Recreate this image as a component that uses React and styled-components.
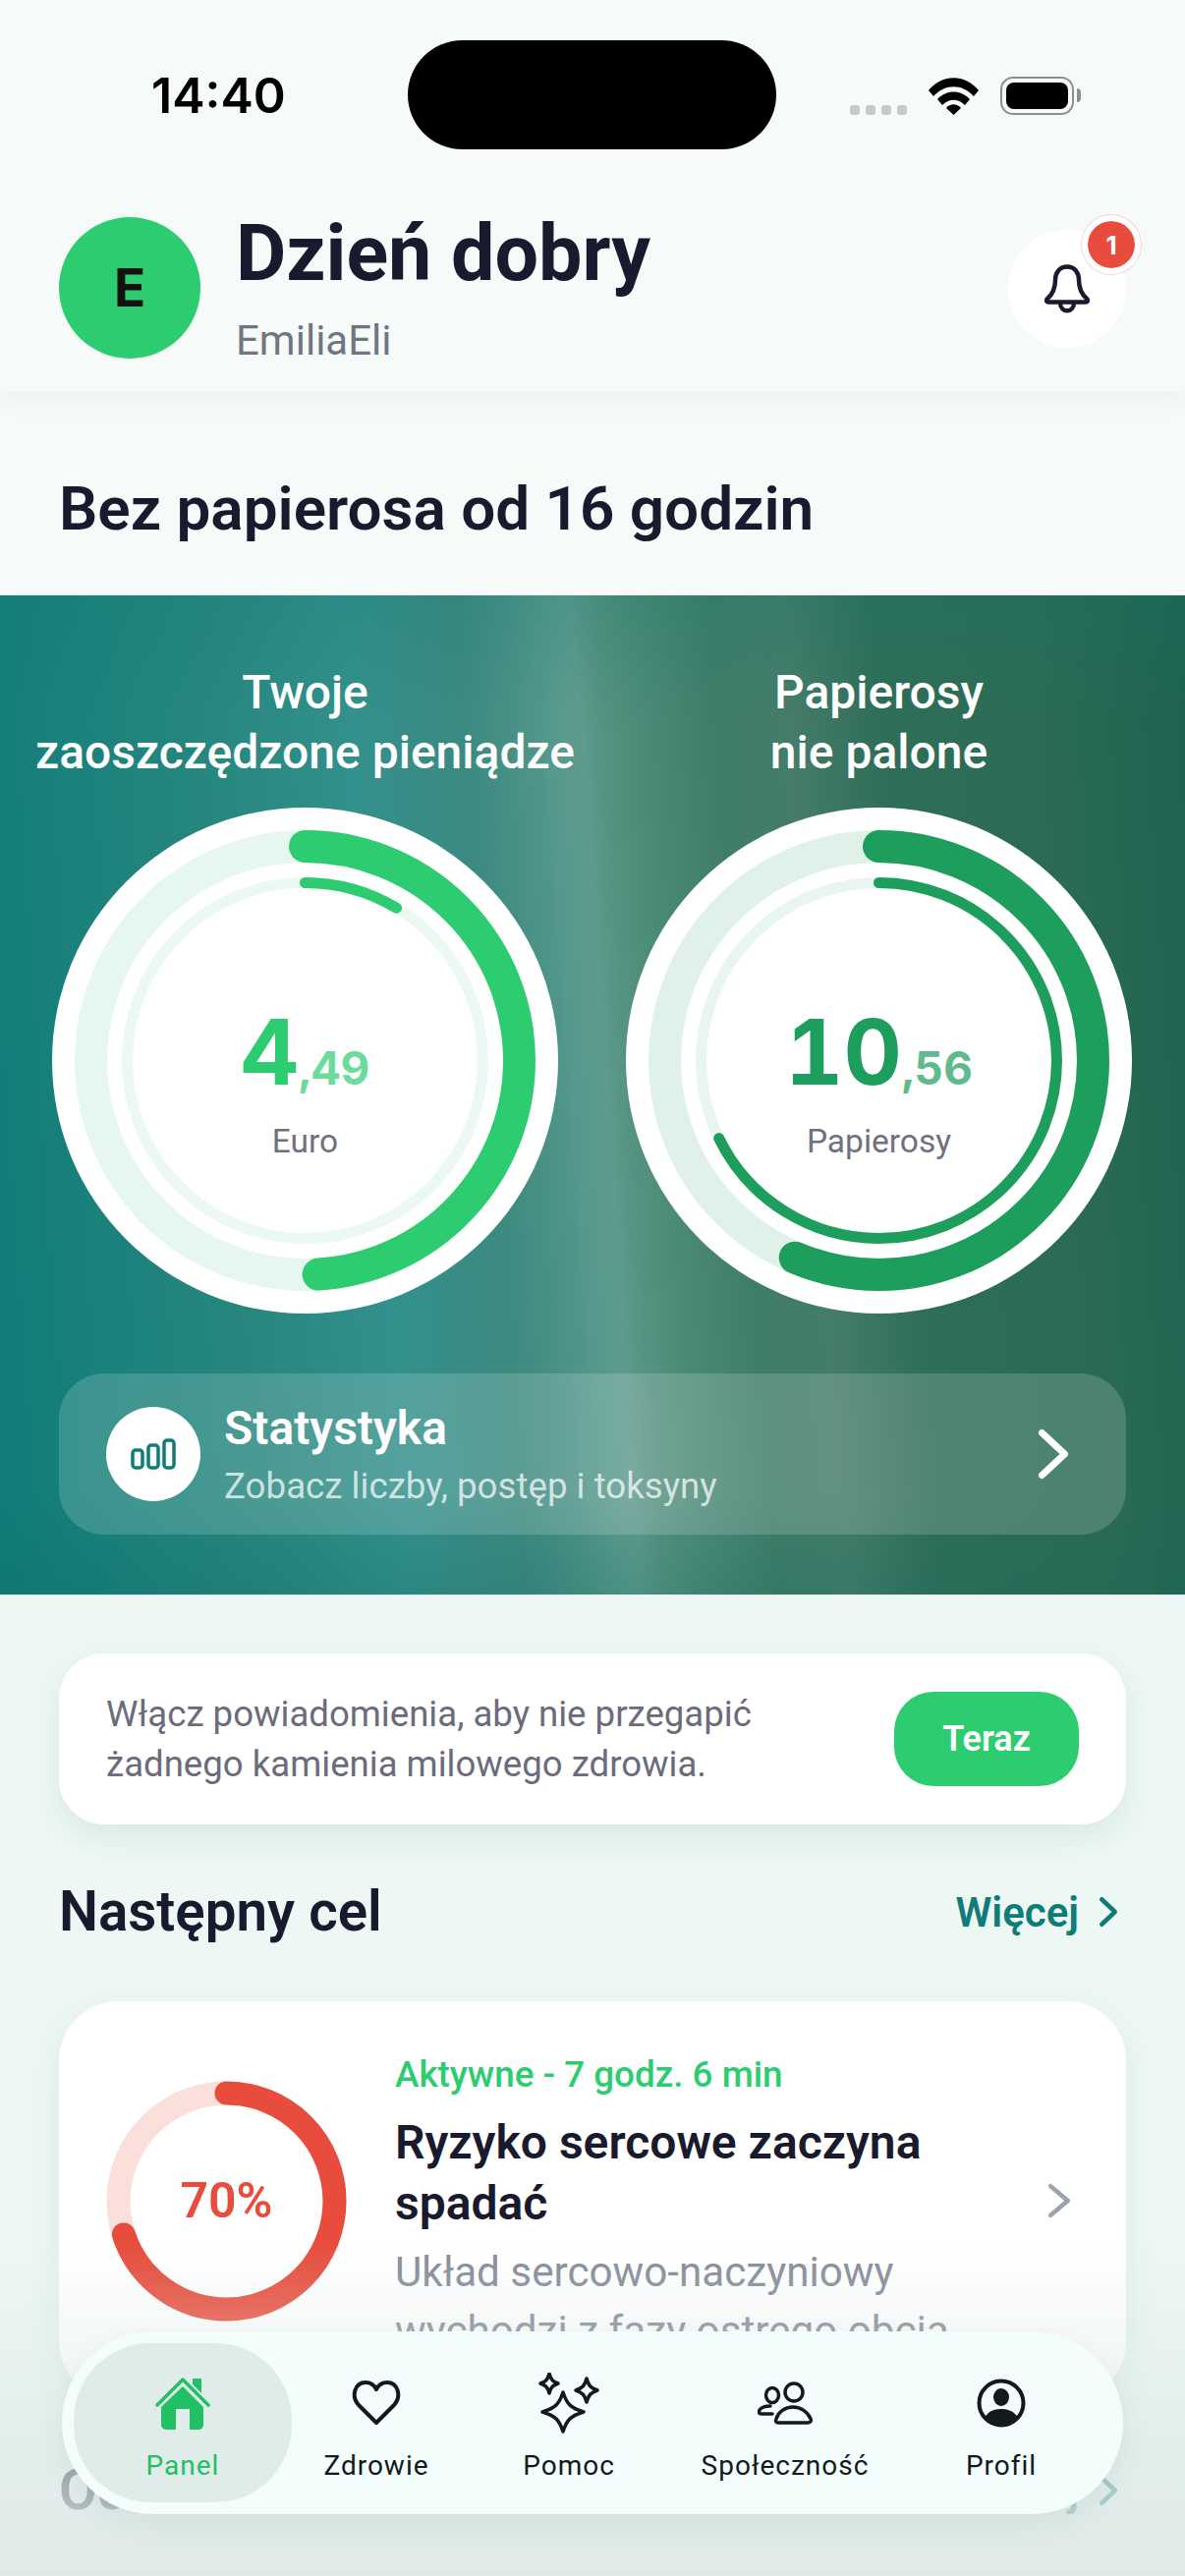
import React from 'react'
import styled, { createGlobalStyle } from 'styled-components'

const GlobalStyle = createGlobalStyle`
  html, body { margin: 0; padding: 0; background: #edf8f4; }
  * { box-sizing: border-box; }
  body { font-family: Roboto, "Noto Sans", sans-serif; }
`

const Page = styled.div`
  position: relative;
  width: 1206px;
  height: 2622px;
  overflow: hidden;
  background: #edf8f4;
`

const Header = styled.header`
  height: 399px;
  background: #f6fbf9;
  box-shadow: 0 8px 24px rgba(30, 60, 50, 0.05);
  position: relative;
`

const StatusBar = styled.div`
  display: flex;
  align-items: flex-start;
  padding-top: 41px;
  height: 221px;
`

const Time = styled.div`
  width: 415px;
  padding: 29px 0 0 154px;
  font-family: Inter, sans-serif;
  font-weight: 600;
  font-size: 50px;
  line-height: 54px;
  color: #000;
`

const Island = styled.div`
  width: 375px;
  height: 111px;
  border-radius: 56px;
  background: #000;
`

const StatusIcons = styled.div`
  display: flex;
  align-items: flex-end;
  margin: 37px 0 0 75px;
`

const SignalDots = styled.div`
  display: flex;
  gap: 6px;
  margin-right: 22px;
`

const Dot = styled.span`
  width: 10px;
  height: 10px;
  border-radius: 3px;
  background: #c8c9c9;
`

const Battery = styled.div`
  width: 75px;
  height: 39px;
  margin-left: 22px;
  padding: 4px;
  border: 2px solid #8f8f8f;
  border-radius: 13px;
  position: relative;
  &::before {
    content: '';
    display: block;
    height: 100%;
    border-radius: 8px;
    background: #000;
  }
  &::after {
    content: '';
    position: absolute;
    right: -9px;
    top: 10px;
    width: 4px;
    height: 14px;
    border-radius: 0 6px 6px 0;
    background: #8f8f8f;
  }
`

const Greeting = styled.div`
  display: flex;
  align-items: center;
  padding: 0 60px;
`

const Avatar = styled.div`
  width: 144px;
  height: 144px;
  border-radius: 50%;
  background: #2ecc71;
  display: flex;
  align-items: center;
  justify-content: center;
  font-family: Inter, sans-serif;
  font-weight: 700;
  font-size: 53px;
  color: #111;
`

const GreetingText = styled.div`
  margin-left: 36px;
  flex: 1;
`

const Hello = styled.div`
  font-weight: 700;
  font-size: 79px;
  line-height: 88px;
  margin-top: -12px;
  color: #1a1a2e;
`

const UserName = styled.div`
  font-size: 42px;
  line-height: 50px;
  margin-top: 20px;
  margin-bottom: -12px;
  color: #6f7583;
`

const BellButton = styled.div`
  position: relative;
  width: 120px;
  height: 120px;
  margin-top: 2px;
  border-radius: 50%;
  background: #fff;
  display: flex;
  align-items: center;
  justify-content: center;
`

const Badge = styled.span`
  position: absolute;
  top: -9px;
  right: -9px;
  width: 48px;
  height: 48px;
  border-radius: 50%;
  background: #e74c3c;
  outline: 6px solid #fff;
  box-shadow: 0 0 0 7px #f6d5d1;
  color: #fff;
  font-family: Inter, sans-serif;
  font-weight: 700;
  font-size: 26px;
  display: flex;
  align-items: center;
  justify-content: center;
`

const Streak = styled.h1`
  margin: 0;
  height: 207px;
  padding: 84px 60px 0;
  font-weight: 600;
  font-size: 62px;
  line-height: 70px;
  color: #1a1a2e;
  background: #f6fbf9;
`

const Hero = styled.section`
  height: 1017px;
  padding-top: 68px;
  background:
    linear-gradient(180deg, rgba(16, 120, 110, 0.2), rgba(16, 110, 100, 0) 12%, rgba(16, 110, 100, 0) 90%, rgba(16, 100, 90, 0.2)),
    linear-gradient(86deg, #0f7c78 0%, #28877f 22%, #33908c 33%, #3c8a80 42%, #4a9187 46%, #599a8e 49.500%, #5f9a8f 51%, #559280 53%, #4c8a78 56%, #3f7d69 62%, #447c69 68%, #2f6e58 75%, #2b6b55 88%, #1f6250 100%);
`

const GaugeRow = styled.div`
  display: grid;
  grid-template-columns: 515px 517px;
  column-gap: 68px;
  padding-left: 53px;
`

const GaugeCol = styled.div`
  display: flex;
  flex-direction: column;
  align-items: center;
`

const GaugeTitle = styled.div`
  height: 122px;
  margin-bottom: 26px;
  font-weight: 500;
  font-size: 48px;
  line-height: 61px;
  color: #fff;
  text-align: center;
  white-space: nowrap;
`

const GaugeWrap = styled.div`
  display: grid;
  width: 515px;
  height: 515px;
  border-radius: 50%;
  background: #fff;
  & > * { grid-area: 1 / 1; }
`

const GaugeCenter = styled.div`
  display: flex;
  flex-direction: column;
  align-items: center;
  justify-content: center;
  padding-top: 42px;
`

const Amount = styled.div`
  display: flex;
  align-items: baseline;
  margin-top: 2px;
  font-family: Inter, sans-serif;
  font-weight: 700;
  font-size: 92px;
  line-height: 100px;
  font-variant-numeric: tabular-nums;
  color: ${p => p.$color};
`

const Cents = styled.span`
  font-size: 46px;
  opacity: 0.7;
`

const GaugeUnit = styled.div`
  margin-top: 5px;
  font-size: 33.500px;
  line-height: 40px;
  color: #6f7080;
`

const StatsCard = styled.div`
  display: flex;
  align-items: center;
  height: 164px;
  margin: 61px 60px 0;
  padding: 0 58px 0 48px;
  border-radius: 46px;
  background: rgba(255, 255, 255, 0.16);
`

const StatsIcon = styled.div`
  width: 96px;
  height: 96px;
  border-radius: 50%;
  background: #fff;
  display: flex;
  align-items: center;
  justify-content: center;
`

const StatsText = styled.div`
  margin-left: 24px;
  flex: 1;
`

const StatsTitle = styled.div`
  font-weight: 600;
  font-size: 48px;
  line-height: 56px;
  color: #fff;
`

const StatsSub = styled.div`
  margin-top: 9px;
  font-size: 36.700px;
  line-height: 44px;
  color: rgba(255, 255, 255, 0.72);
`

const Body = styled.div`
  padding: 60px 60px 0;
`

const Notice = styled.div`
  display: flex;
  align-items: center;
  justify-content: space-between;
  height: 174px;
  padding: 0 48px;
  border-radius: 46px;
  background: #fff;
  box-shadow: 0 12px 32px rgba(30, 70, 60, 0.09);
`

const NoticeText = styled.div`
  font-size: 36.600px;
  line-height: 51px;
  color: #6b6b7b;
`

const NowButton = styled.button`
  width: 188px;
  height: 96px;
  border: 0;
  border-radius: 40px;
  background: #2ecc71;
  color: #fff;
  font-family: inherit;
  font-weight: 600;
  font-size: 36px;
`

const SectionHead = styled.div`
  display: flex;
  align-items: center;
  justify-content: space-between;
  margin-top: ${p => p.$top}px;
`

const SectionTitle = styled.h2`
  margin: 0;
  font-weight: 600;
  font-size: 56.500px;
  line-height: 70px;
  color: #1a1a2e;
`

const MoreLink = styled.div`
  display: flex;
  align-items: center;
  gap: 20px;
  padding-right: 8px;
  font-weight: 600;
  font-size: 42px;
  color: #0f7c78;
`

const GoalCard = styled.div`
  display: flex;
  align-items: center;
  height: 406px;
  margin-top: 56px;
  padding: 0 56px 0 48px;
  border-radius: 60px;
  background: #fff;
  box-shadow: 0 12px 36px rgba(30, 70, 60, 0.08);
`

const GoalRing = styled.div`
  display: grid;
  width: 245px;
  height: 245px;
  flex: none;
  & > * { grid-area: 1 / 1; }
`

const GoalPercent = styled.div`
  display: flex;
  align-items: center;
  justify-content: center;
  font-weight: 600;
  font-size: 50px;
  color: #e74c3c;
`

const GoalText = styled.div`
  width: 640px;
  flex: none;
  margin-left: 49px;
  align-self: flex-start;
  padding-top: 50px;
`

const GoalStatus = styled.div`
  font-weight: 500;
  font-size: 36.800px;
  line-height: 50px;
  color: #2ecc71;
`

const GoalTitle = styled.div`
  margin-top: 13px;
  font-weight: 600;
  font-size: 48px;
  line-height: 62px;
  color: #1a1a2e;
`

const GoalDesc = styled.div`
  margin-top: 9px;
  font-size: 42.200px;
  line-height: 60px;
  color: #858b98;
`

const CardChevron = styled.div`
  margin-left: auto;
  display: flex;
`

const BottomFade = styled.div`
  position: absolute;
  left: 0;
  right: 0;
  bottom: 0;
  height: 340px;
  background: linear-gradient(180deg, rgba(221, 233, 231, 0), rgba(221, 233, 231, 0.62) 60%, rgba(223, 234, 232, 0.95));
`

const TabBar = styled.nav`
  position: absolute;
  left: 63px;
  top: 2373px;
  width: 1080px;
  height: 186px;
  padding: 12px;
  border-radius: 93px;
  background: #f3fdfc;
  box-shadow: 0 10px 30px rgba(30, 70, 60, 0.07);
  display: grid;
  grid-template-columns: 222px 172px 220px 220px 220px;
`

const Tab = styled.div`
  display: flex;
  flex-direction: column;
  align-items: center;
  padding-top: 30px;
  border-radius: 78px;
  background: ${p => (p.$active ? '#e0ecea' : 'transparent')};
  color: ${p => (p.$active ? '#22c064' : '#111a1c')};
`

const TabIcon = styled.div`
  height: 62px;
  display: flex;
  align-items: center;
  justify-content: center;
`

const TabLabel = styled.div`
  margin-top: 17px;
  font-weight: 450;
  font-size: 28px;
  line-height: 32px;
  letter-spacing: 1px;
  white-space: nowrap;
`

function Ring({ size, rings }) {
  return (
    <svg width={size} height={size} viewBox={`0 0 ${size} ${size}`}>
      {rings.map((r, i) => (
        <g key={i} transform={`rotate(-90 ${size / 2} ${size / 2})`} fill="none" strokeWidth={r.width}>
          <circle cx={size / 2} cy={size / 2} r={r.r} stroke={r.track} />
          <circle cx={size / 2} cy={size / 2} r={r.r} stroke={r.color} pathLength="100" strokeLinecap="round" strokeDasharray={`${r.value} 100`} />
        </g>
      ))}
    </svg>
  )
}

function Chevron({ w, h, color, width }) {
  return (
    <svg width={w} height={h} viewBox={`0 0 ${w} ${h}`} fill="none">
      <path d={`M${width / 2 + 1} ${width / 2 + 1} L${w - width / 2 - 1} ${h / 2} L${width / 2 + 1} ${h - width / 2 - 1}`} stroke={color} strokeWidth={width} strokeLinecap="round" strokeLinejoin="round" />
    </svg>
  )
}

const WifiIcon = () => (
  <svg width="51" height="38" viewBox="0 0 51 38">
    <path d="M0 13 C14 -4 37 -4 51 13 L46 19 C34 6 17 6 5 19 Z" fill="#000" />
    <path d="M9 22 C18 12 33 12 42 22 L37 28 C30 21 21 21 14 28 Z" fill="#000" />
    <path d="M18 31 C22 26 29 26 33 31 L25.500 38 Z" fill="#000" />
  </svg>
)

const BellIcon = () => (
  <svg width="46" height="50" viewBox="0 0 46 50" fill="none" stroke="#1a1a2e" strokeWidth="4.500" strokeLinejoin="round">
    <path d="M23 2.500 C31 2.500 35 9 35 16 C35 26 38 31 43.500 35.500 C44.500 37 43.500 38.500 42 38.500 L4 38.500 C2.500 38.500 1.500 37 2.500 35.500 C8 31 11 26 11 16 C11 9 15 2.500 23 2.500 Z" />
    <path d="M16 39 C16 50 30 50 30 39" />
  </svg>
)

const BarsIcon = () => (
  <svg width="46" height="32" viewBox="0 0 46 32" fill="none" stroke="#0f7c78" strokeWidth="3.500">
    <rect x="2" y="12" width="10" height="18" rx="3" />
    <rect x="18" y="7" width="10" height="23" rx="3" />
    <rect x="34" y="2" width="10" height="28" rx="3" />
  </svg>
)

const HomeIcon = () => (
  <svg width="56" height="54" viewBox="0 0 56 54">
    <path d="M2 29 L28 3 L54 29" fill="none" stroke="#22c064" strokeWidth="3.500" strokeLinecap="round" strokeLinejoin="round" />
    <path d="M38 2 H47 V17 L38 8 Z" fill="#22c064" />
    <path fillRule="evenodd" d="M28 10 L49 31 V49 C49 52 47 54 44 54 H12 C9 54 6 52 6 49 V31 Z M21 54 H35 V33 H21 Z" fill="#22c064" />
  </svg>
)

const HeartIcon = () => (
  <svg width="50" height="46" viewBox="0 0 50 46" fill="none" stroke="#111a1c" strokeWidth="4" strokeLinejoin="round">
    <path d="M25 43 L7 25 C-1 16 3 2 14 2 C19 2 23 5 25 9 C27 5 31 2 36 2 C47 2 51 16 43 25 Z" />
  </svg>
)

const Star = ({ cx, cy, rx, ry, w }) => (
  <path
    d={`M${cx} ${cy - ry} C${cx + rx * 0.2} ${cy - ry * 0.35} ${cx + rx * 0.4} ${cy - ry * 0.2} ${cx + rx} ${cy} C${cx + rx * 0.4} ${cy + ry * 0.2} ${cx + rx * 0.2} ${cy + ry * 0.35} ${cx} ${cy + ry} C${cx - rx * 0.2} ${cy + ry * 0.35} ${cx - rx * 0.4} ${cy + ry * 0.2} ${cx - rx} ${cy} C${cx - rx * 0.4} ${cy - ry * 0.2} ${cx - rx * 0.2} ${cy - ry * 0.35} ${cx} ${cy - ry} Z`}
    strokeWidth={w}
  />
)

const SparklesIcon = () => (
  <svg width="62" height="62" viewBox="0 0 62 62" fill="none" stroke="#111a1c" strokeLinejoin="round">
    <Star cx={25} cy={40} rx={21} ry={20} w={3.5} />
    <Star cx={11} cy={11} rx={9} ry={10} w={3.5} />
    <Star cx={49} cy={18} rx={11} ry={12} w={3.5} />
  </svg>
)

const UsersIcon = () => (
  <svg width="56" height="44" viewBox="0 0 56 44" fill="none" stroke="#111a1c" strokeWidth="3.500" strokeLinecap="round" strokeLinejoin="round">
    <ellipse cx="15" cy="14" rx="6.500" ry="7.500" />
    <ellipse cx="37" cy="11" rx="9" ry="9" />
    <path d="M15 33 H4 C1 33 1 31 2 29 C4 26 8 25 13 25" />
    <path d="M21 42 C19 42 18 41 19 38 C21 31 28 26 36 26 C44 26 51 31 54 38 C55 41 53 42 51 42 Z" />
  </svg>
)

const ProfileIcon = () => (
  <svg width="50" height="50" viewBox="0 0 50 50" fill="none">
    <circle cx="25" cy="25" r="22.500" stroke="#111a1c" strokeWidth="4" />
    <ellipse cx="25" cy="19" rx="8" ry="9" fill="#111a1c" />
    <path d="M8 40 C12 33 18 31 25 31 C32 31 38 33 42 40 C38 45 32 48 25 48 C18 48 12 45 8 40 Z" fill="#111a1c" />
  </svg>
)

const tabs = [
  { label: 'Panel', icon: <HomeIcon />, active: true },
  { label: 'Zdrowie', icon: <HeartIcon /> },
  { label: 'Pomoc', icon: <SparklesIcon /> },
  { label: 'Społeczność', icon: <UsersIcon /> },
  { label: 'Profil', icon: <ProfileIcon /> },
]

const gauges = [
  {
    title: ['Twoje', 'zaoszczędzone pieniądze'],
    value: '4',
    cents: ',49',
    unit: 'Euro',
    color: '#2ecc71',
    rings: [
      { r: 218, width: 33, track: '#e5f7ee', color: '#2ecc71', value: 49 },
      { r: 181, width: 11, track: '#ecf9f3', color: '#2ecc71', value: 8.6 },
    ],
  },
  {
    title: ['Papierosy', 'nie palone'],
    value: '10',
    cents: ',56',
    unit: 'Papierosy',
    color: '#1e9e5c',
    rings: [
      { r: 218, width: 33, track: '#e0f1e9', color: '#1e9e5c', value: 56.4 },
      { r: 181, width: 11, track: '#e8f6ef', color: '#1e9e5c', value: 67.8 },
    ],
  },
]

export default function App() {
  return (
    <Page>
      <GlobalStyle />
      <Header>
        <StatusBar>
          <Time>14:40</Time>
          <Island />
          <StatusIcons>
            <SignalDots>
              <Dot /><Dot /><Dot /><Dot />
            </SignalDots>
            <WifiIcon />
            <Battery />
          </StatusIcons>
        </StatusBar>
        <Greeting>
          <Avatar>E</Avatar>
          <GreetingText>
            <Hello>Dzień dobry</Hello>
            <UserName>EmiliaEli</UserName>
          </GreetingText>
          <BellButton>
            <BellIcon />
            <Badge>1</Badge>
          </BellButton>
        </Greeting>
      </Header>
      <Streak>Bez papierosa od 16 godzin</Streak>
      <Hero>
        <GaugeRow>
          {gauges.map(g => (
            <GaugeCol key={g.unit}>
              <GaugeTitle>{g.title[0]}<br />{g.title[1]}</GaugeTitle>
              <GaugeWrap>
                <Ring size={515} rings={g.rings} />
                <GaugeCenter>
                  <Amount $color={g.color}>{g.value}<Cents>{g.cents}</Cents></Amount>
                  <GaugeUnit>{g.unit}</GaugeUnit>
                </GaugeCenter>
              </GaugeWrap>
            </GaugeCol>
          ))}
        </GaugeRow>
        <StatsCard>
          <StatsIcon><BarsIcon /></StatsIcon>
          <StatsText>
            <StatsTitle>Statystyka</StatsTitle>
            <StatsSub>Zobacz liczby, postęp i toksyny</StatsSub>
          </StatsText>
          <Chevron w={32} h={52} color="#fff" width={7} />
        </StatsCard>
      </Hero>
      <Body>
        <Notice>
          <NoticeText>Włącz powiadomienia, aby nie przegapić<br />żadnego kamienia milowego zdrowia.</NoticeText>
          <NowButton>Teraz</NowButton>
        </Notice>
        <SectionHead $top={54}>
          <SectionTitle>Następny cel</SectionTitle>
          <MoreLink>Więcej <Chevron w={20} h={32} color="#0f7c78" width={4.5} /></MoreLink>
        </SectionHead>
        <GoalCard>
          <GoalRing>
            <Ring size={245} rings={[{ r: 110, width: 24, track: '#fadfdb', color: '#e74c3c', value: 70 }]} />
            <GoalPercent>70%</GoalPercent>
          </GoalRing>
          <GoalText>
            <GoalStatus>Aktywne - 7 godz. 6 min</GoalStatus>
            <GoalTitle>Ryzyko sercowe zaczyna spadać</GoalTitle>
            <GoalDesc>Układ sercowo-naczyniowy wychodzi z fazy ostrego obcia</GoalDesc>
          </GoalText>
          <CardChevron><Chevron w={24} h={36} color="#9ca3af" width={4.5} /></CardChevron>
        </GoalCard>
        <SectionHead $top={57}>
          <SectionTitle>Oc</SectionTitle>
          <MoreLink>Więcej <Chevron w={20} h={32} color="#0f7c78" width={4.5} /></MoreLink>
        </SectionHead>
      </Body>
      <BottomFade />
      <TabBar>
        {tabs.map(t => (
          <Tab key={t.label} $active={t.active}>
            <TabIcon>{t.icon}</TabIcon>
            <TabLabel>{t.label}</TabLabel>
          </Tab>
        ))}
      </TabBar>
    </Page>
  )
}
